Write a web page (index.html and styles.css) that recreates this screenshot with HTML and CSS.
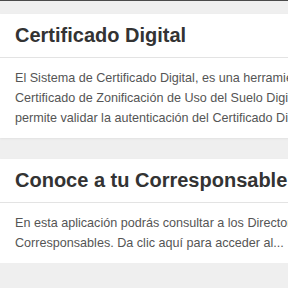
FILE: index.html
```html
<!DOCTYPE html>
<html lang="es">
<head>
    <meta charset="UTF-8">
    <meta name="viewport" content="width=device-width, initial-scale=1.0">
    <title>Aplicaciones</title>
    <link rel="stylesheet" href="styles.css">
</head>
<body>
    <div class="topbar"></div>
    <div class="content">
        <div class="card">
            <div class="card-header">
                <h2>Certificado Digital</h2>
            </div>
            <div class="card-body">
                <p>El Sistema de Certificado Digital, es una herramienta que permite consultar el<br>
                Certificado de Zonificación de Uso del Suelo Digital, además de que<br>
                permite validar la autenticación del Certificado Digital.</p>
            </div>
        </div>

        <div class="card">
            <div class="card-header">
                <h2>Conoce a tu Corresponsable</h2>
            </div>
            <div class="card-body">
                <p>En esta aplicación podrás consultar a los Directores Responsables de Obra y<br>
                Corresponsables. Da clic aquí para acceder al...</p>
            </div>
        </div>
    </div>
</body>
</html>
```

FILE: styles.css
```css
html, body {
    overflow: hidden;
}
body {
    margin: 0;
    background: #efefef;
    font-family: 'Liberation Sans', Arial, sans-serif;
}
.topbar {
    height: 1px;
    background: #4a4a4a;
}
.content {
    padding-top: 13px;
    display: flex;
    flex-direction: column;
    gap: 21px;
    width: 480px;
}
.card {
    background: #fff;
    box-shadow: 0 1px 2px rgba(0,0,0,0.06);
}
.card-header {
    padding: 10px 15px;
    border-bottom: 1px solid #e3e3e3;
}
.card-header h2 {
    margin: 0;
    font-size: 20px;
    font-weight: bold;
    color: #333;
    white-space: nowrap;
}
.card-body {
    padding: 10px 15px;
}
.card-body p {
    margin: 0;
    font-size: 12.6px;
    line-height: 20px;
    color: #555;
    white-space: nowrap;
}
```
